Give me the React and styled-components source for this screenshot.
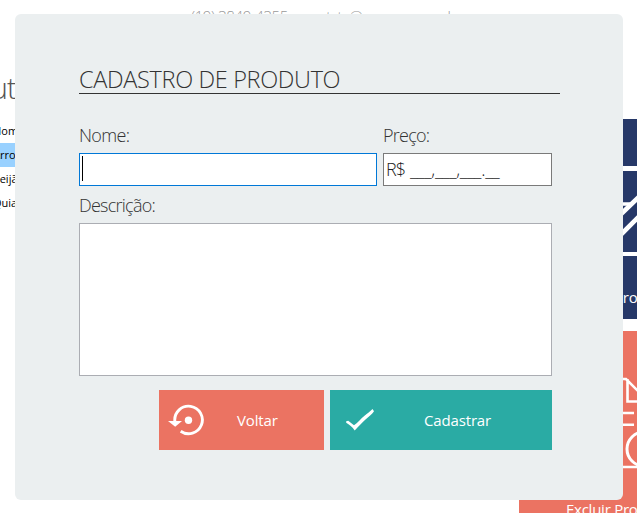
import React from "react";
import styled, { createGlobalStyle } from "styled-components";

const GlobalStyle = createGlobalStyle`
  * { box-sizing: border-box; }
  html, body { margin: 0; overflow: hidden; background: #fff; }
  body { font-family: "Open Sans", "Noto Sans", sans-serif; }
`;

const Screen = styled.div`
  position: relative;
  width: 637px;
  height: 513px;
  overflow: hidden;
  background: #fff;
`;

const Backdrop = styled.div`
  display: flex;
  flex-direction: column;
  width: 637px;
  height: 513px;
  overflow: hidden;
`;

const ContactBar = styled.header`
  display: flex;
  flex: none;
  gap: 15px;
  height: 62px;
  padding: 6px 0 0 191px;
  color: #999;
  font-size: 15px;
  font-weight: 300;
  line-height: 20px;
  white-space: nowrap;
`;

const Phone = styled.span`
  width: 98px;
  letter-spacing: -0.4px;
`;

const Email = styled.span`
  letter-spacing: -0.85px;
`;

const Workspace = styled.div`
  display: flex;
  justify-content: space-between;
  height: 451px;
`;

const ProductPane = styled.section`
  width: 400px;
`;

const PaneTitle = styled.h1`
  margin: 0 0 0 -90px;
  width: 106px;
  height: 57px;
  display: flex;
  justify-content: flex-end;
  color: #555;
  font-size: 30px;
  line-height: 51px;
  font-weight: 300;
  letter-spacing: -1px;
`;

const ProductRow = styled.div`
  height: 24px;
  background: ${(p) => (p.$selected ? "#99d1ff" : "#fff")};
  color: #000;
  font-size: 11px;
  line-height: 24px;
  font-weight: 500;
`;

const ProductName = styled.span`
  display: block;
  margin-left: ${(p) => p.$shift}px;
`;

const ActionRail = styled.aside`
  display: flex;
  flex-direction: column;
  flex: none;
  width: 118px;
  padding-top: 57px;
`;

const ActionTile = styled.div`
  flex: none;
  display: flex;
  height: ${(p) => p.$height}px;
  margin-bottom: ${(p) => p.$gap || 0}px;
  background: ${(p) => (p.$danger ? "#eb7362" : "#263868")};
  color: #fff;
  font-size: 15px;
  line-height: 20px;
  overflow: hidden;
  white-space: nowrap;
`;

const TileLabel = styled.span`
  margin: ${(p) => p.$top}px 0 0 ${(p) => p.$left}px;
  letter-spacing: -0.25px;
`;

const DangerTile = styled(ActionTile)`
  flex-direction: column;
`;

const Dialog = styled.form`
  position: absolute;
  left: 15px;
  top: 14px;
  width: 608px;
  height: 486px;
  padding: 50px 63px 0 64px;
  border-radius: 6px;
  background: #ebeff0;
`;

const DialogTitle = styled.h2`
  height: 30px;
  margin: 0;
  border-bottom: 1px solid #333;
  color: #333;
  font-size: 23.5px;
  line-height: 30px;
  font-weight: 300;
  letter-spacing: -0.34px;
  white-space: nowrap;
`;

const FormBody = styled.div`
  width: 473px;
  padding-top: 30px;
`;

const FieldGrid = styled.div`
  display: grid;
  grid-template-columns: 298px 169px;
  column-gap: 6px;
`;

const Field = styled.label`
  display: block;
`;

const FieldLabel = styled.span`
  display: block;
  height: ${(p) => p.$height || 29}px;
  color: #333;
  font-size: 18px;
  line-height: ${(p) => p.$line || 23}px;
  font-weight: 300;
  letter-spacing: ${(p) => p.$tracking}px;
`;

const InputBox = styled.div`
  display: flex;
  height: 33px;
  padding: 2px;
  border: 1px solid ${(p) => (p.$focused ? "#0078d7" : "#7a7a7a")};
  background: #fff;
  color: #222;
  font-size: 18px;
  line-height: 26px;
  font-weight: 300;
  white-space: pre;
`;

const Caret = styled.span`
  width: 1px;
  height: 25px;
  background: #000;
`;

const Currency = styled.span`
  width: 24px;
  letter-spacing: -1px;
`;

const Mask = styled.span`
  letter-spacing: -0.28px;
`;

const DescriptionField = styled.div`
  padding-top: 7px;
`;

const DescriptionBox = styled.div`
  height: 153px;
  border: 1px solid #abadb3;
  background: #fff;
`;

const ButtonRow = styled.div`
  display: grid;
  grid-template-columns: 165px 222px;
  gap: 6px;
  justify-content: end;
  padding-top: 14px;
`;

const ActionButton = styled.button`
  display: flex;
  align-items: center;
  height: 60px;
  padding: 0 0 0 ${(p) => p.$inset}px;
  border: 0;
  background: ${(p) => (p.$primary ? "#2aaba4" : "#eb7362")};
  color: #fff;
  font: 400 15px/20px "Open Sans", sans-serif;
  text-align: left;
`;

const ButtonText = styled.span`
  margin-left: ${(p) => p.$offset}px;
  letter-spacing: -0.15px;
`;

const Drawing = styled.svg`
  display: block;
  flex: none;
`;

function EditIcon() {
  return (
    <Drawing width="118" height="81" viewBox="0 0 118 81" fill="none">
      <path d="M98 33H112" stroke="#fff" strokeWidth="3.5" />
      <path d="M100 45L122 24M98 67.5L122 43.5" stroke="#fff" strokeWidth="4.7" />
    </Drawing>
  );
}

function DeleteIcon() {
  return (
    <Drawing width="118" height="170" viewBox="0 0 118 170" fill="none" stroke="#fff">
      <path d="M94 48H107L126 67M108.5 48V70.5H126" strokeWidth="2.6" />
      <path d="M96 82H115M96 93.7H115M96 136H126" strokeWidth="2.6" />
      <circle cx="125" cy="118" r="17" strokeWidth="3" />
    </Drawing>
  );
}

function RestoreIcon() {
  return (
    <Drawing width="37" height="32" viewBox="0 0 37 32" fill="none">
      <path d="M6.8 17A13.8 13.8 0 1 1 12.7 27.3" stroke="#fff" strokeWidth="2.9" />
      <path d="M0 17H14L7.2 22.7Z" fill="#fff" />
      <circle cx="20.5" cy="16.3" r="3.7" fill="#fff" />
    </Drawing>
  );
}

function CheckIcon() {
  return (
    <Drawing width="30" height="24" viewBox="0 0 30 24" fill="none">
      <path d="M1.2 13.3L3.2 12.7L9 17.3C12.5 15 16 10.5 19.5 7.7C22.5 5.2 25 3.6 27.5 1L29 3.3C27 6.5 23.5 8.6 20.5 11.5C17 15 13.5 18 9.7 22.6C7.5 18.8 4.2 17 1.2 14.8Z" fill="#fff" />
    </Drawing>
  );
}

export default function App() {
  return (
    <>
      <GlobalStyle />
      <Screen>
        <Backdrop>
          <ContactBar>
            <Phone>(19) 3849-4355</Phone>
            <Email>contato@empresa.com.br</Email>
          </ContactBar>
          <Workspace>
            <ProductPane>
              <PaneTitle>Produt</PaneTitle>
              <ProductRow><ProductName $shift={-7}>Nome</ProductName></ProductRow>
              <ProductRow $selected><ProductName $shift={-7}>Arroz</ProductName></ProductRow>
              <ProductRow><ProductName $shift={-6}>Feijão</ProductName></ProductRow>
              <ProductRow><ProductName $shift={-7}>Quiabo</ProductName></ProductRow>
            </ProductPane>
            <ActionRail>
              <ActionTile $height={47} $gap={5} />
              <ActionTile $height={81} $gap={4}><EditIcon /></ActionTile>
              <ActionTile $height={63} $gap={12}>
                <TileLabel $top={31} $left={95}>Produto</TileLabel>
              </ActionTile>
              <DangerTile $danger $height={182}>
                <DeleteIcon />
                <TileLabel $top={-2} $left={47}>Excluir Produto</TileLabel>
              </DangerTile>
            </ActionRail>
          </Workspace>
        </Backdrop>
        <Dialog>
          <DialogTitle>CADASTRO DE PRODUTO</DialogTitle>
          <FormBody>
            <FieldGrid>
              <Field>
                <FieldLabel $tracking={-0.65}>Nome:</FieldLabel>
                <InputBox $focused><Caret /></InputBox>
              </Field>
              <Field>
                <FieldLabel $tracking={-0.75}>Preço:</FieldLabel>
                <InputBox>
                  <Currency>R$</Currency>
                  <Mask>___,___,___.__</Mask>
                </InputBox>
              </Field>
            </FieldGrid>
            <DescriptionField>
              <FieldLabel $height={30} $line={25} $tracking={-0.75}>Descrição:</FieldLabel>
              <DescriptionBox />
            </DescriptionField>
            <ButtonRow>
              <ActionButton type="button" $inset={9}>
                <RestoreIcon />
                <ButtonText $offset={32}>Voltar</ButtonText>
              </ActionButton>
              <ActionButton type="button" $primary $inset={15}>
                <CheckIcon />
                <ButtonText $offset={49}>Cadastrar</ButtonText>
              </ActionButton>
            </ButtonRow>
          </FormBody>
        </Dialog>
      </Screen>
    </>
  );
}
